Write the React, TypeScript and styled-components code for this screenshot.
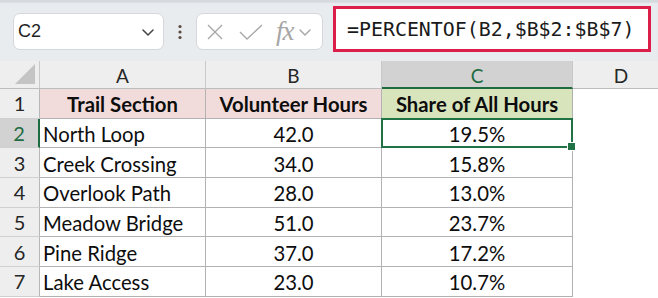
import styled, { createGlobalStyle, css } from "styled-components";

const GlobalStyle = createGlobalStyle`
  html, body {
    margin: 0;
    padding: 0;
    background: #ffffff;
  }
  body {
    font-family: Lato, "Noto Sans", sans-serif;
  }
`;

const Page = styled.div`
  width: 658px;
  height: 298px;
  overflow: hidden;
  background: #ffffff;
`;

const Toolbar = styled.div`
  height: 61px;
  box-sizing: border-box;
  display: flex;
  align-items: flex-start;
  padding-left: 13px;
  background: #e9ecef;
  border-top: 2px solid #d6d9dd;
  box-shadow: inset 0 1px 1px rgba(0, 0, 0, 0.06);
`;

const NameBox = styled.div`
  margin-top: 11px;
  width: 151px;
  height: 37px;
  box-sizing: border-box;
  display: flex;
  align-items: center;
  justify-content: space-between;
  padding: 0 8px 0 4px;
  background: #ffffff;
  border: 1px solid #d4d7db;
  border-radius: 7px;
  font-family: "Liberation Sans", Arial, sans-serif;
  font-size: 18px;
  color: #1f1f1f;
`;

const Kebab = styled.div`
  width: 32px;
  height: 37px;
  margin-top: 11px;
  display: flex;
  align-items: center;
  justify-content: center;
`;

const FxBox = styled.div`
  margin-top: 11px;
  width: 127px;
  height: 37px;
  box-sizing: border-box;
  display: flex;
  align-items: center;
  padding-left: 9px;
  background: #ffffff;
  border: 1px solid #d4d7db;
  border-radius: 7px;
`;

const FxLabel = styled.span`
  font-family: "Liberation Serif", "Times New Roman", serif;
  font-style: italic;
  font-size: 27px;
  color: #a6a6a6;
  margin-left: 12px;
  margin-right: 4px;
  line-height: 1;
  letter-spacing: -1px;
`;

const FormulaBar = styled.div`
  margin-top: 4px;
  margin-left: 10px;
  width: 318px;
  height: 46px;
  box-sizing: border-box;
  display: flex;
  align-items: center;
  padding-left: 11px;
  background: #ffffff;
  border: 3px solid #dc1f4a;
  font-family: "DejaVu Sans Mono", "Liberation Mono", monospace;
  font-size: 19.9px;
  color: #1a1a1a;
  white-space: nowrap;
`;

const Grid = styled.div`
  display: grid;
  grid-template-columns: 40px 166px 176px 191px 96px;
  grid-template-rows: 28px repeat(7, 29.7px);
`;

const Corner = styled.div`
  position: relative;
  background: #eeeeee;
  border-right: 1px solid #c9c9c9;
  border-bottom: 1px solid #bdbdbd;
  box-sizing: border-box;
  overflow: hidden;

  &::after {
    content: "";
    position: absolute;
    right: 4px;
    bottom: 4px;
    border-style: solid;
    border-width: 0 0 20px 20px;
    border-color: transparent transparent #c4c4c4 transparent;
  }
`;

const ColHead = styled.div<{ $active?: boolean; $last?: boolean }>`
  display: flex;
  align-items: center;
  justify-content: center;
  box-sizing: border-box;
  background: #eeeeee;
  border-right: ${(p) => (p.$last ? "none" : "1px solid #c9c9c9")};
  border-bottom: 1px solid #bdbdbd;
  font-size: 19px;
  color: #262626;
  padding-top: 2px;
  ${(p) =>
    p.$active &&
    css`
      background: #d2d2d2;
      color: #1e6b41;
      border-bottom: 2px solid #1e6b41;
    `}
`;

const RowHead = styled.div<{ $active?: boolean }>`
  display: flex;
  align-items: center;
  justify-content: center;
  box-sizing: border-box;
  background: #eeeeee;
  border-right: 1px solid #b8b8b8;
  border-bottom: 1px solid #d0d0d0;
  font-size: 20px;
  color: #262626;
  ${(p) =>
    p.$active &&
    css`
      background: #d2d2d2;
      color: #1e6b41;
      border-right: 2px solid #1e6b41;
    `}
`;

type Align = "left" | "center";

const Cell = styled.div<{ $align?: Align; $fill?: string; $bold?: boolean; $plain?: boolean }>`
  position: relative;
  display: flex;
  align-items: center;
  justify-content: ${(p) => (p.$align === "center" ? "center" : "flex-start")};
  box-sizing: border-box;
  padding: 2px 3px 0;
  background: ${(p) => p.$fill || "#ffffff"};
  border-right: ${(p) => (p.$plain ? "none" : "1px solid #b2b2b2")};
  border-bottom: ${(p) => (p.$plain ? "none" : "1px solid #b2b2b2")};
  font-size: 20.3px;
  font-weight: ${(p) => (p.$bold ? 700 : 400)};
  color: #0d0d0d;
  white-space: nowrap;
`;

const Selection = styled.div`
  position: absolute;
  z-index: 2;
  left: -1px;
  top: -1px;
  right: -1px;
  bottom: -1px;
  border: 2px solid #217346;
  pointer-events: none;
`;

const FillHandle = styled.div`
  position: absolute;
  right: -5px;
  bottom: -5px;
  width: 7px;
  height: 7px;
  background: #217346;
  border: 1px solid #ffffff;
  box-sizing: content-box;
`;

const rows = [
  ["North Loop", "42.0", "19.5%"],
  ["Creek Crossing", "34.0", "15.8%"],
  ["Overlook Path", "28.0", "13.0%"],
  ["Meadow Bridge", "51.0", "23.7%"],
  ["Pine Ridge", "37.0", "17.2%"],
  ["Lake Access", "23.0", "10.7%"],
];

const Chevron = ({ size = 14, color = "#444" }: { size?: number; color?: string }) => (
  <svg width={size} height={size} viewBox="0 0 14 14">
    <path d="M2 5 L7 10 L12 5" fill="none" stroke={color} strokeWidth="1.5" strokeLinecap="round" strokeLinejoin="round" />
  </svg>
);

export default function App() {
  return (
    <Page>
      <GlobalStyle />
      <Toolbar>
        <NameBox>
          <span>C2</span>
          <Chevron />
        </NameBox>
        <Kebab>
          <svg width="6" height="16" viewBox="0 0 6 16">
            <circle cx="3" cy="2.5" r="1.6" fill="#5a4a42" />
            <circle cx="3" cy="8" r="1.6" fill="#5a4a42" />
            <circle cx="3" cy="13.5" r="1.6" fill="#5a4a42" />
          </svg>
        </Kebab>
        <FxBox>
          <svg width="18" height="18" viewBox="0 0 18 18">
            <path d="M2 2 L16 16 M16 2 L2 16" stroke="#a8a8a8" strokeWidth="1.4" fill="none" />
          </svg>
          <svg width="26" height="18" viewBox="0 0 26 18" style={{ marginLeft: 14 }}>
            <path d="M2 9 L9 16 L24 2" stroke="#a8a8a8" strokeWidth="1.4" fill="none" />
          </svg>
          <FxLabel>fx</FxLabel>
          <Chevron size={14} color="#a8a8a8" />
        </FxBox>
        <FormulaBar>=PERCENTOF(B2,$B$2:$B$7)</FormulaBar>
      </Toolbar>

      <Grid>
        <Corner />
        <ColHead>A</ColHead>
        <ColHead>B</ColHead>
        <ColHead $active>C</ColHead>
        <ColHead $last>D</ColHead>

        <RowHead>1</RowHead>
        <Cell $align="center" $bold $fill="#f2dcdb">Trail Section</Cell>
        <Cell $align="center" $bold $fill="#f2dcdb">Volunteer Hours</Cell>
        <Cell $align="center" $bold $fill="#d8e4bc">Share of All Hours</Cell>
        <Cell $plain />

        {rows.map((r, i) => (
          <Row key={r[0]} n={i + 2} name={r[0]} hours={r[1]} share={r[2]} />
        ))}
      </Grid>
    </Page>
  );
}

const Row = ({ n, name, hours, share }: { n: number; name: string; hours: string; share: string }) => {
  const active = n === 2;
  return (
    <>
      <RowHead $active={active}>{n}</RowHead>
      <Cell>{name}</Cell>
      <Cell $align="center">{hours}</Cell>
      <Cell $align="center">
        {share}
        {active && (
          <Selection>
            <FillHandle />
          </Selection>
        )}
      </Cell>
      <Cell $plain />
    </>
  );
};
